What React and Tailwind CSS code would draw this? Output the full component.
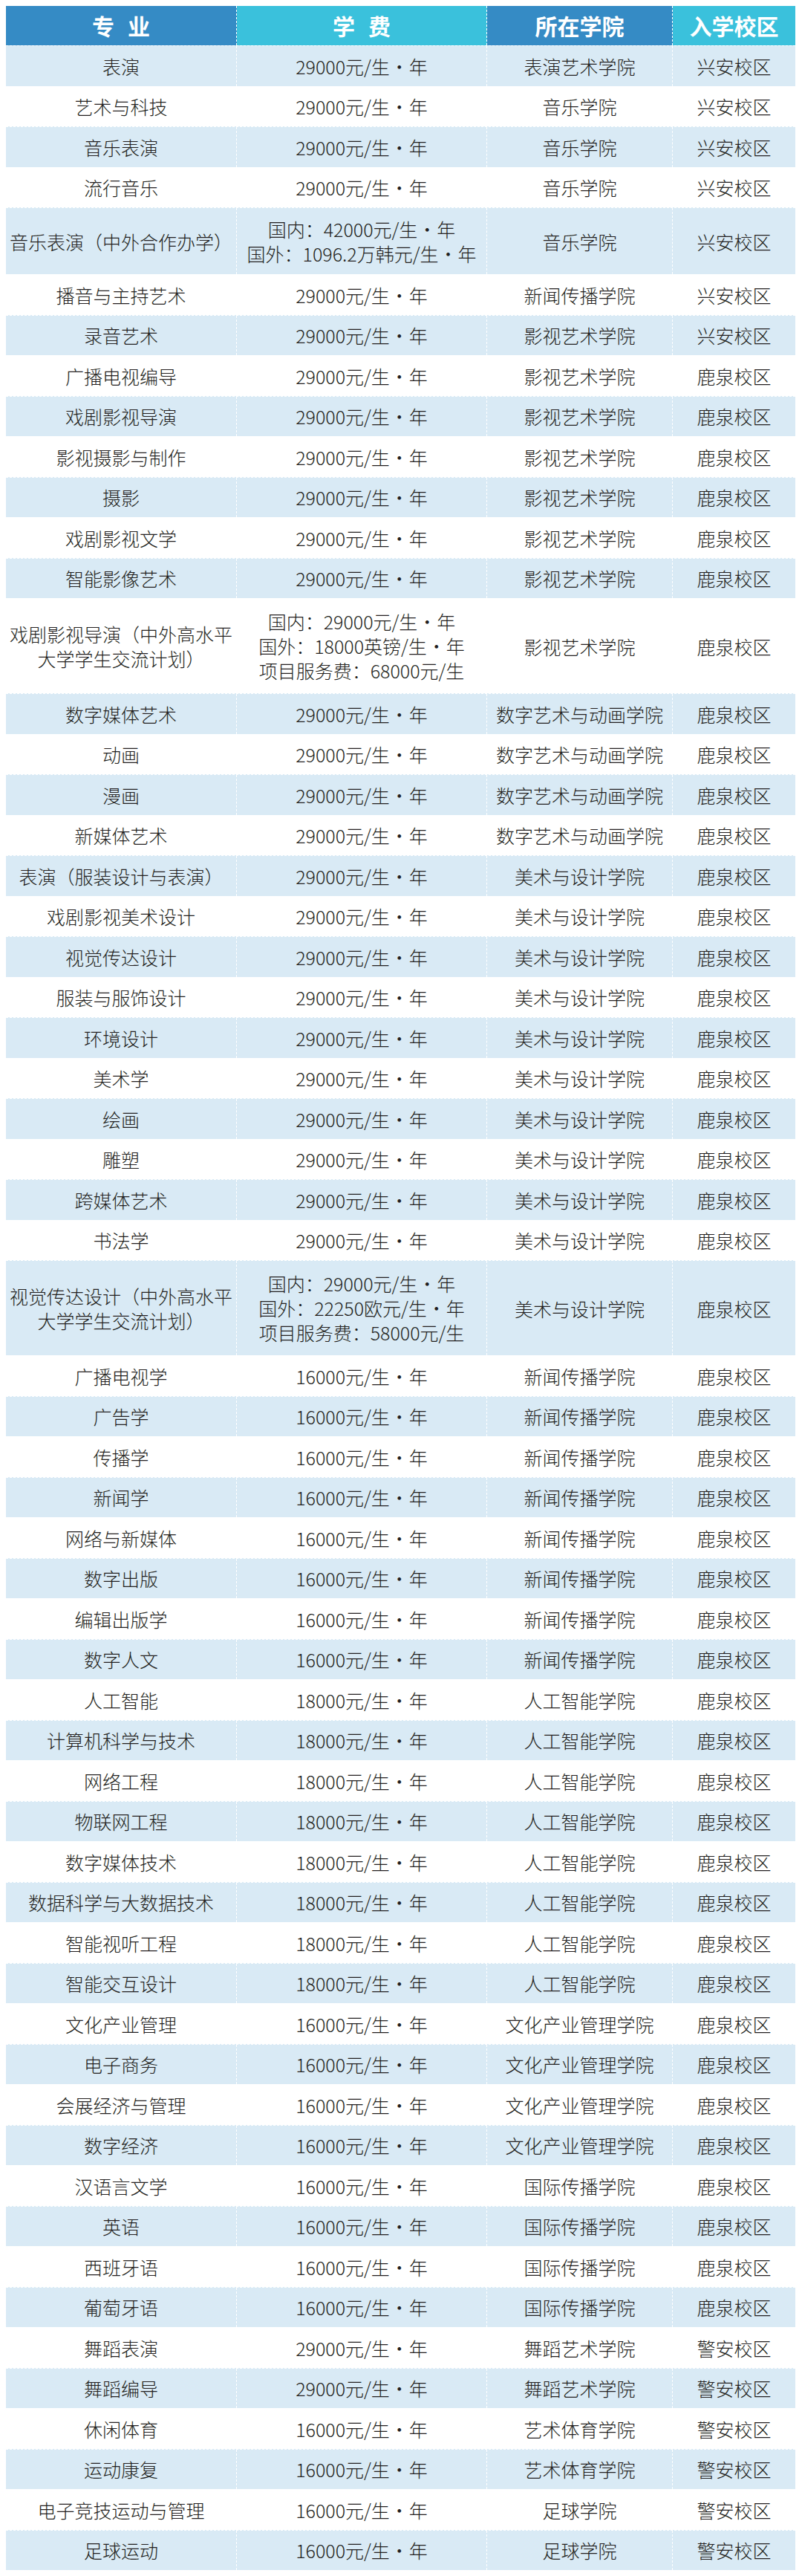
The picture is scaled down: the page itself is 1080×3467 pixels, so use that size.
import React from 'react';

const F29 = '29000元/生·年';
const F18 = '18000元/生·年';
const F16 = '16000元/生·年';

const TALL2 = 'h-[90px]';
const TALL3 = 'h-[128px]';

const group = (names, fee, school, campus) => names.map((n) => [n, fee, school, campus]);

const rows = [
  ['表演', F29, '表演艺术学院', '兴安校区'],
  ...group(['艺术与科技', '音乐表演', '流行音乐'], F29, '音乐学院', '兴安校区'),
  [['音乐表演（中外合作办学）'], ['国内：42000元/生·年', '国外：1096.2万韩元/生·年'], '音乐学院', '兴安校区', TALL2],
  ['播音与主持艺术', F29, '新闻传播学院', '兴安校区'],
  ['录音艺术', F29, '影视艺术学院', '兴安校区'],
  ...group(['广播电视编导', '戏剧影视导演', '影视摄影与制作', '摄影', '戏剧影视文学', '智能影像艺术'], F29, '影视艺术学院', '鹿泉校区'),
  [
    ['戏剧影视导演（中外高水平', '大学学生交流计划）'],
    ['国内：29000元/生·年', '国外：18000英镑/生·年', '项目服务费：68000元/生'],
    '影视艺术学院',
    '鹿泉校区',
    TALL3,
  ],
  ...group(['数字媒体艺术', '动画', '漫画', '新媒体艺术'], F29, '数字艺术与动画学院', '鹿泉校区'),
  ...group(
    ['表演（服装设计与表演）', '戏剧影视美术设计', '视觉传达设计', '服装与服饰设计', '环境设计', '美术学', '绘画', '雕塑', '跨媒体艺术', '书法学'],
    F29,
    '美术与设计学院',
    '鹿泉校区'
  ),
  [
    ['视觉传达设计（中外高水平', '大学学生交流计划）'],
    ['国内：29000元/生·年', '国外：22250欧元/生·年', '项目服务费：58000元/生'],
    '美术与设计学院',
    '鹿泉校区',
    TALL3,
  ],
  ...group(['广播电视学', '广告学', '传播学', '新闻学', '网络与新媒体', '数字出版', '编辑出版学', '数字人文'], F16, '新闻传播学院', '鹿泉校区'),
  ...group(['人工智能', '计算机科学与技术', '网络工程', '物联网工程', '数字媒体技术', '数据科学与大数据技术', '智能视听工程', '智能交互设计'], F18, '人工智能学院', '鹿泉校区'),
  ...group(['文化产业管理', '电子商务', '会展经济与管理', '数字经济'], F16, '文化产业管理学院', '鹿泉校区'),
  ...group(['汉语言文学', '英语', '西班牙语', '葡萄牙语'], F16, '国际传播学院', '鹿泉校区'),
  ...group(['舞蹈表演', '舞蹈编导'], F29, '舞蹈艺术学院', '警安校区'),
  ...group(['休闲体育', '运动康复'], F16, '艺术体育学院', '警安校区'),
  ...group(['电子竞技运动与管理', '足球运动'], F16, '足球学院', '警安校区'),
];

// the middle dot in the fee sits in a full-width slot
const withDot = (text) => {
  const parts = text.split('·');
  return parts.map((p, i) => (
    <React.Fragment key={i}>
      {p}
      {i < parts.length - 1 && <span className="inline-block w-[26px] text-center">·</span>}
    </React.Fragment>
  ));
};

const Cell = ({ value, last }) => {
  const lines = Array.isArray(value) ? value : [value];
  return (
    <div
      className={`flex flex-col items-center justify-center text-center whitespace-nowrap ${
        lines.length > 1 ? 'leading-[33px]' : 'leading-[30px]'
      } ${last ? '' : 'border-r border-dashed border-white'}`}
    >
      {lines.map((line, i) => (
        <div key={i}>{withDot(line)}</div>
      ))}
    </div>
  );
};

export default function App() {
  return (
    <div className="w-[1080px] bg-white pt-[8px] pb-[11px] pl-[8px] font-['Noto_Sans_CJK_SC',sans-serif]">
      <div className="w-[1063px]">
        <div className="grid h-[53px] grid-cols-[311px_337px_250px_165px] text-[30px] font-bold text-white">
          <div className="flex items-center justify-center gap-[18px] border-r border-dashed border-white bg-[#358bc5]">
            <span>专</span>
            <span>业</span>
          </div>
          <div className="flex items-center justify-center gap-[18px] border-r border-dashed border-white bg-[#3ac1dc]">
            <span>学</span>
            <span>费</span>
          </div>
          <div className="flex items-center justify-center border-r border-dashed border-white bg-[#358bc5]">所在学院</div>
          <div className="flex items-center justify-center bg-[#3ac1dc]">入学校区</div>
        </div>

        {rows.map((row, idx) => {
          const [major, fee, school, campus, height] = row;
          const bg = idx % 2 === 0 ? 'bg-[#d9eaf5]' : 'bg-white';
          return (
            <div
              key={idx}
              className={`grid grid-cols-[311px_337px_250px_165px] border-t border-dashed border-white text-[25px] font-light text-[#231f20] ${
                height || 'h-[54.5px]'
              } ${bg}`}
            >
              <Cell value={major} />
              <Cell value={fee} />
              <Cell value={school} />
              <Cell value={campus} last />
            </div>
          );
        })}
      </div>
    </div>
  );
}
